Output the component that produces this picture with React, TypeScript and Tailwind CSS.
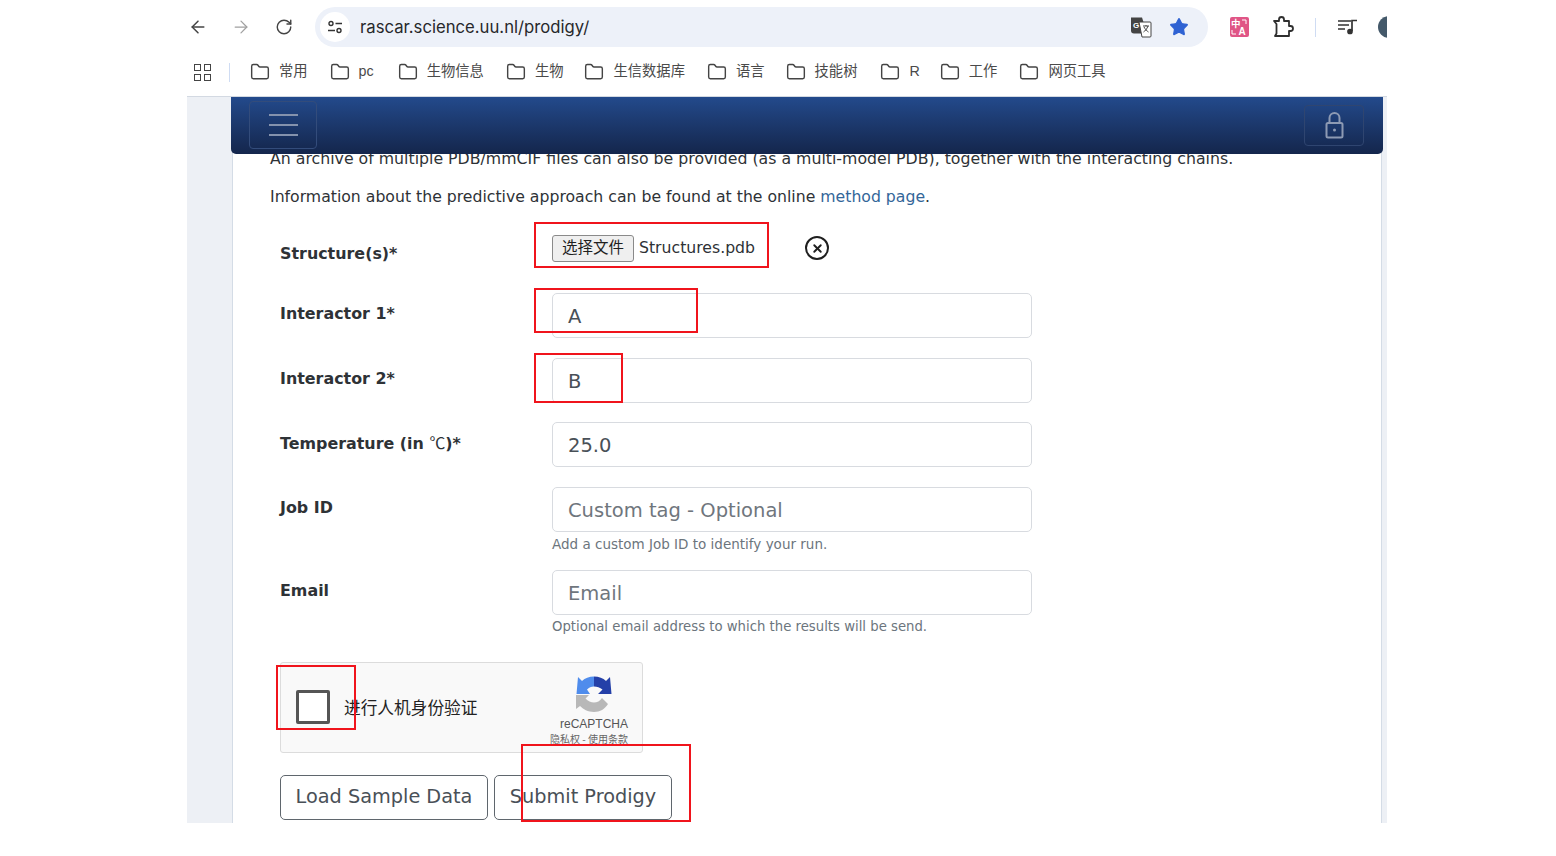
import React from "react";
import { ArrowLeft, ArrowRight, RotateCw, Folder, Star, X } from "lucide-react";

const SANS = "font-['Liberation_Sans','Noto_Sans_CJK_SC',sans-serif]";
const DV = "font-['DejaVu_Sans','Noto_Sans_CJK_SC',sans-serif]";

const bookmarks = ["常用", "pc", "生物信息", "生物", "生信数据库", "语言", "技能树", "R", "工作", "网页工具"];
const gaps = [22, 24, 22, 21, 22, 21, 23, 20, 22, 0];

function RedBox({ cls }: { cls: string }) {
  return <div className={`absolute border-[2.5px] border-[#f0141c] pointer-events-none z-20 ${cls}`} />;
}

function Field({ label, value, placeholder, help, helpCls, cls }: { label: React.ReactNode; value?: string; placeholder?: string; help?: string; helpCls?: string; cls: string }) {
  return (
    <div className={`flex ${cls}`}>
      <div className="w-[321px] pl-[49px] pt-[11px] text-[15.9px] font-bold text-[#2e3236] leading-[20px]">{label}</div>
      <div>
        <div className={`w-[480px] h-[45px] rounded-[5px] border border-[#d8dbe0] bg-white pl-[15px] pt-[2px] flex items-center text-[19.5px] ${value ? "text-[#495057]" : "text-[#6f767d]"}`}>
          {value ?? placeholder}
        </div>
        {help && <div className={`text-[#6c757d] leading-[18px] mt-[3px] ${helpCls ?? ""}`}>{help}</div>}
      </div>
    </div>
  );
}

export default function App() {
  return (
    <div className="w-[1556px] h-[856px] bg-white overflow-hidden">
      <div className={`relative ml-[187px] w-[1200px] h-[823px] overflow-hidden bg-white ${DV}`}>
        {/* toolbar */}
        <div className={`h-[48px] pt-[6px] flex items-center ${SANS}`}>
          <ArrowLeft className="w-[20px] h-[20px] text-[#444] ml-[1px] shrink-0" strokeWidth={1.8} />
          <ArrowRight className="w-[20px] h-[20px] text-[#a0a0a0] ml-[23px] shrink-0" strokeWidth={1.5} />
          <RotateCw className="w-[18px] h-[18px] text-[#444] ml-[24px] shrink-0" strokeWidth={1.9} />
          <div className="ml-[22px] w-[893px] h-[40px] rounded-full bg-[#edf1f9] flex items-center relative shrink-0">
            <div className="ml-[5px] w-[30px] h-[30px] rounded-full bg-white flex items-center justify-center">
              <svg width="16" height="14" viewBox="0 0 16 14" fill="none" stroke="#333" strokeWidth="1.4">
                <circle cx="4" cy="3.5" r="2" />
                <path d="M8.500 3.500H15M1 10.500h7" />
                <circle cx="12" cy="10.500" r="2" />
              </svg>
            </div>
            <span className="ml-[10px] pt-[1px] text-[16.7px] text-[#27282b] font-['Inter',sans-serif]">rascar.science.uu.nl/prodigy/</span>
            <div className="ml-auto flex items-center">
              <svg width="22" height="22" viewBox="0 0 22 22">
                <path d="M1 1.500h11l5 16H4a3 3 0 0 1-3-3z" fill="#444" />
                <path d="M9 6h11a1 1 0 0 1 1 1v13a1 1 0 0 1-1 1h-8z" fill="#fff" stroke="#444" strokeWidth="1" />
                <text x="3" y="12" fontSize="8" fontWeight="700" fill="#fff" fontFamily="Liberation Sans">G</text>
                <path d="M13 10h6M16 9v1M18 10c-1 3-3 5-4.500 6M14 11c1 2 3 4 4.500 5" stroke="#444" strokeWidth="1" fill="none" />
              </svg>
              <Star className="w-[20px] h-[20px] ml-[17px] mr-[19px] text-[#2f62d3] fill-[#2f62d3]" strokeWidth={1.5} />
            </div>
          </div>
          <svg width="19" height="20" viewBox="0 0 19 20" className="ml-[22px] shrink-0">
            <rect width="19" height="20" rx="2" fill="#e05586" />
            <text x="1" y="10" fontSize="9.500" fontWeight="700" fill="#fff" fontFamily="Noto Sans CJK SC">中</text>
            <text x="8.500" y="17.500" fontSize="10" fontWeight="700" fill="#fff" fontFamily="Liberation Sans">A</text>
            <path d="M12 3h4v4M2 13v4h4" fill="none" stroke="#fff" strokeWidth="1" />
          </svg>
          <svg width="22" height="22" viewBox="0 0 22 22" fill="none" stroke="#2f2f2f" strokeWidth="1.800" strokeLinejoin="round" className="ml-[23px] shrink-0">
            <path d="M2 5h5V3.500a2.500 2.500 0 0 1 5 0V5h5v5h1.500a2.500 2.500 0 0 1 0 5H17v5H3l1.500-2.500V8z" />
          </svg>
          <div className="w-[1px] h-[19px] bg-[#cfdcf3] ml-[21px] shrink-0" />
          <svg width="20" height="16" viewBox="0 0 20 16" fill="none" stroke="#333" strokeWidth="1.700" className="ml-[22px] shrink-0">
            <path d="M0 2h13M0 6h11M0 10h7" />
            <path d="M14 12V1.500h5" />
            <circle cx="12" cy="12.500" r="2" fill="#333" />
          </svg>
          <div className="w-[22px] h-[22px] rounded-full bg-[#44596a] ml-[20px] shrink-0" />
        </div>
        {/* bookmarks */}
        <div className={`h-[48px] flex items-center text-[#4a4a4a] text-[14.3px] ${SANS}`}>
          <div className="ml-[7px] grid grid-cols-2 gap-[3px]">
            <div className="w-[7px] h-[7px] border-[1.5px] border-[#444]" />
            <div className="w-[7px] h-[7px] border-[1.5px] border-[#444]" />
            <div className="w-[7px] h-[7px] border-[1.5px] border-[#444]" />
            <div className="w-[7px] h-[7px] border-[1.5px] border-[#444]" />
          </div>
          <div className="w-[1px] h-[19px] bg-[#cfdcf3] ml-[18px] mr-[20px]" />
          {bookmarks.map((b, i) => (
            <div key={b} className="flex items-center" style={{ marginRight: gaps[i] }}>
              <Folder className="w-[20px] h-[20px] text-[#444] mr-[9px]" strokeWidth={1.7} />
              <span>{b}</span>
            </div>
          ))}
        </div>
        <div className="h-[1px] bg-[#d3d9e2]" />
        {/* page */}
        <div className="flex h-[726px] bg-[#edf0f5]">
          <div className="w-[44px] shrink-0" />
          <div className="w-[1152px] shrink-0 relative">
            <div className="relative z-10 h-[57px] rounded-b-[5px] bg-gradient-to-b from-[#234a8c] to-[#14264c] flex items-center justify-between pl-[18px] pr-[19px]">
              <div className="w-[68px] h-[48px] -mt-[2px] rounded-[4px] border border-[#334c7b] flex flex-col items-center justify-center gap-[8px]">
                <div className="w-[29px] h-[2px] bg-[#8492ad]" />
                <div className="w-[29px] h-[2px] bg-[#8492ad]" />
                <div className="w-[29px] h-[2px] bg-[#8492ad]" />
              </div>
              <div className="w-[60px] h-[41px] rounded-[4px] border border-[#2f4570] flex items-center justify-center">
                <svg width="19" height="27" viewBox="0 0 19 27" fill="none" stroke="#8d9ab3" strokeWidth="2">
                  <path d="M4.500 11V6a5 5 0 0 1 10 0v5" />
                  <rect x="1.500" y="11" width="16" height="14.500" rx="1.500" />
                  <circle cx="9.500" cy="18" r="1.500" fill="#8d9ab3" stroke="none" />
                </svg>
              </div>
            </div>
            <div className="absolute left-[1px] right-[1px] top-0 bottom-0 bg-white border-x border-[#d4dce6]" />
            <div className="relative -mt-[5px] pl-[39px] text-[#2e3236]">
              <div className="text-[15.76px] leading-[20px] whitespace-nowrap">An archive of multiple PDB/mmCIF files can also be provided (as a multi-model PDB), together with the interacting chains.</div>
              <div className="text-[15.7px] leading-[20px] mt-[18px] whitespace-nowrap">Information about the predictive approach can be found at the online <span className="text-[#336699]">method page</span>.</div>
            </div>
            <div className="relative">
              {/* file */}
              <div className="flex h-[24px] mt-[29px] items-center">
                <div className="w-[321px] pl-[49px] text-[15.9px] font-bold text-[#2e3236] leading-[20px] pt-[12px]">Structure(s)*</div>
                <button className={`w-[82px] h-[27px] rounded-[3px] border border-[#8a8a8a] bg-[#efefef] text-[15.5px] text-[#1f1f1f] ${SANS}`}>选择文件</button>
                <span className="ml-[5px] text-[15.7px] text-[#2e3236]">Structures.pdb</span>
                <div className="ml-[50px] w-[24px] h-[24px] rounded-full border-2 border-[#1f1f1f] flex items-center justify-center">
                  <X className="w-[13px] h-[13px] text-[#1f1f1f]" strokeWidth={3.5} />
                </div>
              </div>
              <Field cls="mt-[33px]" label="Interactor 1*" value="A" />
              <Field cls="mt-[20px]" label="Interactor 2*" value="B" />
              <Field cls="mt-[19px]" label={<>Temperature (in <span className="font-['Noto_Sans_CJK_SC',sans-serif] font-normal">℃</span>)*</>} value="25.0" />
              <Field cls="mt-[20px]" label="Job ID" placeholder="Custom tag - Optional" help="Add a custom Job ID to identify your run." helpCls="text-[13.5px]" />
              <Field cls="mt-[17px]" label="Email" placeholder="Email" help="Optional email address to which the results will be send." helpCls="text-[13.25px]" />
              {/* captcha */}
              <div className={`ml-[49px] mt-[26px] w-[363px] h-[91px] rounded-[3px] border border-[#dcdcdc] bg-[#f9f9f9] flex items-center ${SANS}`}>
                <div className="ml-[15px] -mt-[2px] w-[34px] h-[34px] rounded-[2px] border-[3px] border-[#555] bg-white shrink-0" />
                <span className="ml-[14px] text-[16.7px] text-[#222] font-['Noto_Sans_CJK_SC',sans-serif]">进行人机身份验证</span>
                <div className="ml-auto mr-[7px] w-[82px] flex flex-col items-center mt-[6px]">
                  <svg width="36" height="36" viewBox="0 0 36 36">
                    <path d="M18 0.500C23 0.500 27 2 30 5L34 1 35.500 18H22L26.500 13.500C24 11.500 21 10.500 18 10.500Z" fill="#2440a8" />
                    <path d="M18 0.500C13 0.500 9 2 6 5L2 1 0.500 18H14L11 13.500C13 11.500 15 10.500 18 10.500Z" fill="#4f8cec" />
                    <path d="M0 19H13L9.500 22.500C12 25 15 26.500 18 26.500C21 26.500 24 25 26 22L32 28C29 33 24 36 18 36C12 36 7 33 4 30L0 33Z" fill="#b8b8b8" />
                  </svg>
                  <div className="text-[12px] text-[#555] leading-[14px] mt-[5px]">reCAPTCHA</div>
                  <div className="text-[10px] text-[#666] leading-[12px] mt-[2px] whitespace-nowrap -translate-x-[5px] font-['Noto_Sans_CJK_SC',sans-serif]">隐私权 - 使用条款</div>
                </div>
              </div>
              {/* buttons */}
              <div className="ml-[49px] mt-[22px] flex gap-[6px]">
                <button className="w-[208px] h-[45px] rounded-[5px] border border-[#5f666d] bg-white text-[19.3px] text-[#495057]">Load Sample Data</button>
                <button className="w-[178px] h-[45px] rounded-[5px] border border-[#5f666d] bg-white text-[19.3px] text-[#495057]">Submit Prodigy</button>
              </div>
            </div>
          </div>
        </div>
        <RedBox cls="left-[347px] top-[222px] w-[235px] h-[46px]" />
        <RedBox cls="left-[347px] top-[288px] w-[164px] h-[45px]" />
        <RedBox cls="left-[347px] top-[353px] w-[89px] h-[50px]" />
        <RedBox cls="left-[89px] top-[665px] w-[80px] h-[65px]" />
        <RedBox cls="left-[334px] top-[744px] w-[170px] h-[78px]" />
      </div>
    </div>
  );
}
